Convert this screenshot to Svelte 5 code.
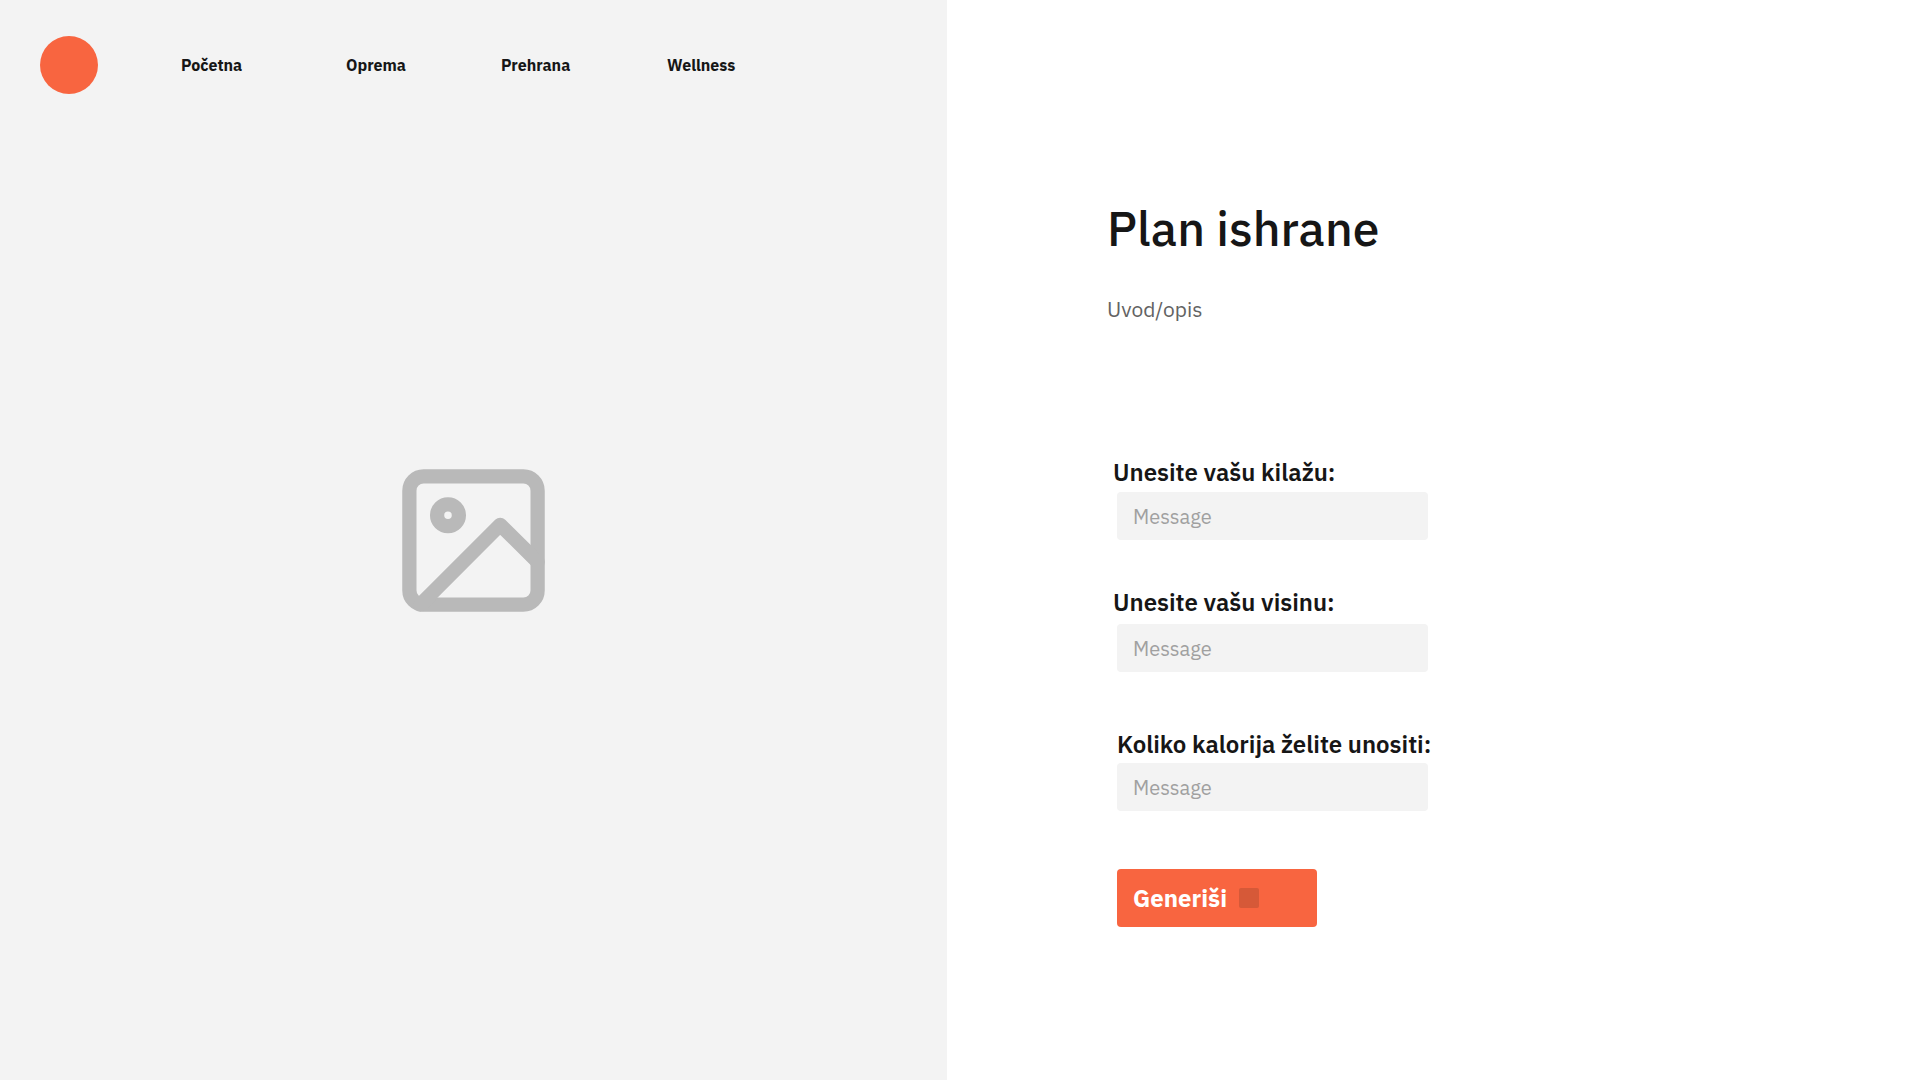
<script lang="ts">
  const links = ['Početna', 'Oprema', 'Prehrana', 'Wellness'];
  const fields = [
    { id: 'weight', label: 'Unesite vašu kilažu:' },
    { id: 'height', label: 'Unesite vašu visinu:' },
    { id: 'calories', label: 'Koliko kalorija želite unositi:' },
  ];
</script>

<div class="page">
  <section class="media">
    <header>
      <a class="logo" href="#home" aria-label="Početna"></a>
      <nav>
        {#each links as link}
          <a href="#{link.toLowerCase()}">{link}</a>
        {/each}
      </nav>
    </header>
    <div class="placeholder">
      <svg viewBox="0 0 24 24" fill="none" stroke="currentColor" stroke-width="2" stroke-linecap="round" stroke-linejoin="round" aria-hidden="true">
        <rect x="3" y="3" width="18" height="18" rx="2" />
        <circle cx="8.42" cy="8.45" r="1.53" />
        <path d="M21 15L15.75 9.8L4.55 21" />
      </svg>
    </div>
  </section>

  <main>
    <h1>Plan ishrane</h1>
    <p>Uvod/opis</p>
    <form onsubmit={(e) => e.preventDefault()}>
      {#each fields as field}
        <div class="field {field.id}">
          <label for={field.id}>{field.label}</label>
          <input id={field.id} type="text" placeholder="Message" />
        </div>
      {/each}
      <button type="submit">Generiši <span class="swatch"></span></button>
    </form>
  </main>
</div>

<style>
  :global(body) {
    margin: 0;
    background: #fff;
  }

  .page {
    display: grid;
    grid-template-columns: 947fr 973fr;
    min-height: 100vh;
    color: #161616;
    font-family: 'IBM Plex Sans', Roboto, sans-serif;
  }

  .media {
    display: grid;
    grid-template-rows: auto 1fr;
    background: #f3f3f3;
  }

  header {
    display: flex;
    align-items: center;
    gap: 83px;
    padding: 36px 40px 0;
    grid-area: 1 / 1;
  }

  .logo {
    flex: none;
    width: 58px;
    height: 58px;
    border-radius: 50%;
    background: #f86540;
  }

  nav {
    display: grid;
    grid-template-columns: 165px 155px 166px auto;
    font-size: 16px;
    line-height: 24px;
    font-weight: 700;
  }

  nav a {
    color: inherit;
    text-decoration: none;
  }

  .placeholder {
    grid-area: 1 / 1 / 3 / 2;
    display: grid;
    place-items: center;
    color: #b9b9b9;
    pointer-events: none;
  }

  .placeholder svg {
    width: 171px;
    height: 171px;
  }

  main {
    padding: 196px 40px 40px 160px;
  }

  h1 {
    margin: 0;
    font-size: 48px;
    line-height: 64px;
    font-weight: 500;
  }

  p {
    margin: 33px 0 0;
    font-size: 21px;
    line-height: 32px;
    font-weight: 400;
    color: #636363;
  }

  form {
    display: flex;
    flex-direction: column;
    align-items: flex-start;
    padding: 131px 0 0 10px;
  }

  .field {
    display: flex;
    flex-direction: column;
    gap: 4px;
    margin-bottom: 46px;
  }

  .field.height {
    gap: 6px;
    margin-bottom: 56px;
  }

  .field.calories {
    gap: 3px;
    margin-bottom: 58px;
  }

  label {
    margin-left: -4px;
    font-size: 24px;
    line-height: 32px;
    font-weight: 600;
    white-space: nowrap;
  }

  .calories label {
    margin-left: 0;
  }

  input {
    box-sizing: border-box;
    width: 311px;
    height: 48px;
    padding: 0 16px;
    border: 0;
    border-radius: 4px;
    background: #f3f3f3;
    color: inherit;
    font: 400 20px/32px 'IBM Plex Sans', Roboto, sans-serif;
  }

  input::placeholder {
    color: #a0a0a0;
    opacity: 1;
  }

  button {
    display: flex;
    align-items: center;
    gap: 12px;
    width: 200px;
    height: 58px;
    padding: 0 16px;
    border: 0;
    border-radius: 4px;
    background: #f86540;
    color: #fff;
    font: 700 24px/32px 'IBM Plex Sans', Roboto, sans-serif;
  }

  .swatch {
    width: 20px;
    height: 20px;
    border-radius: 2px;
    background: #d65938;
  }
</style>
